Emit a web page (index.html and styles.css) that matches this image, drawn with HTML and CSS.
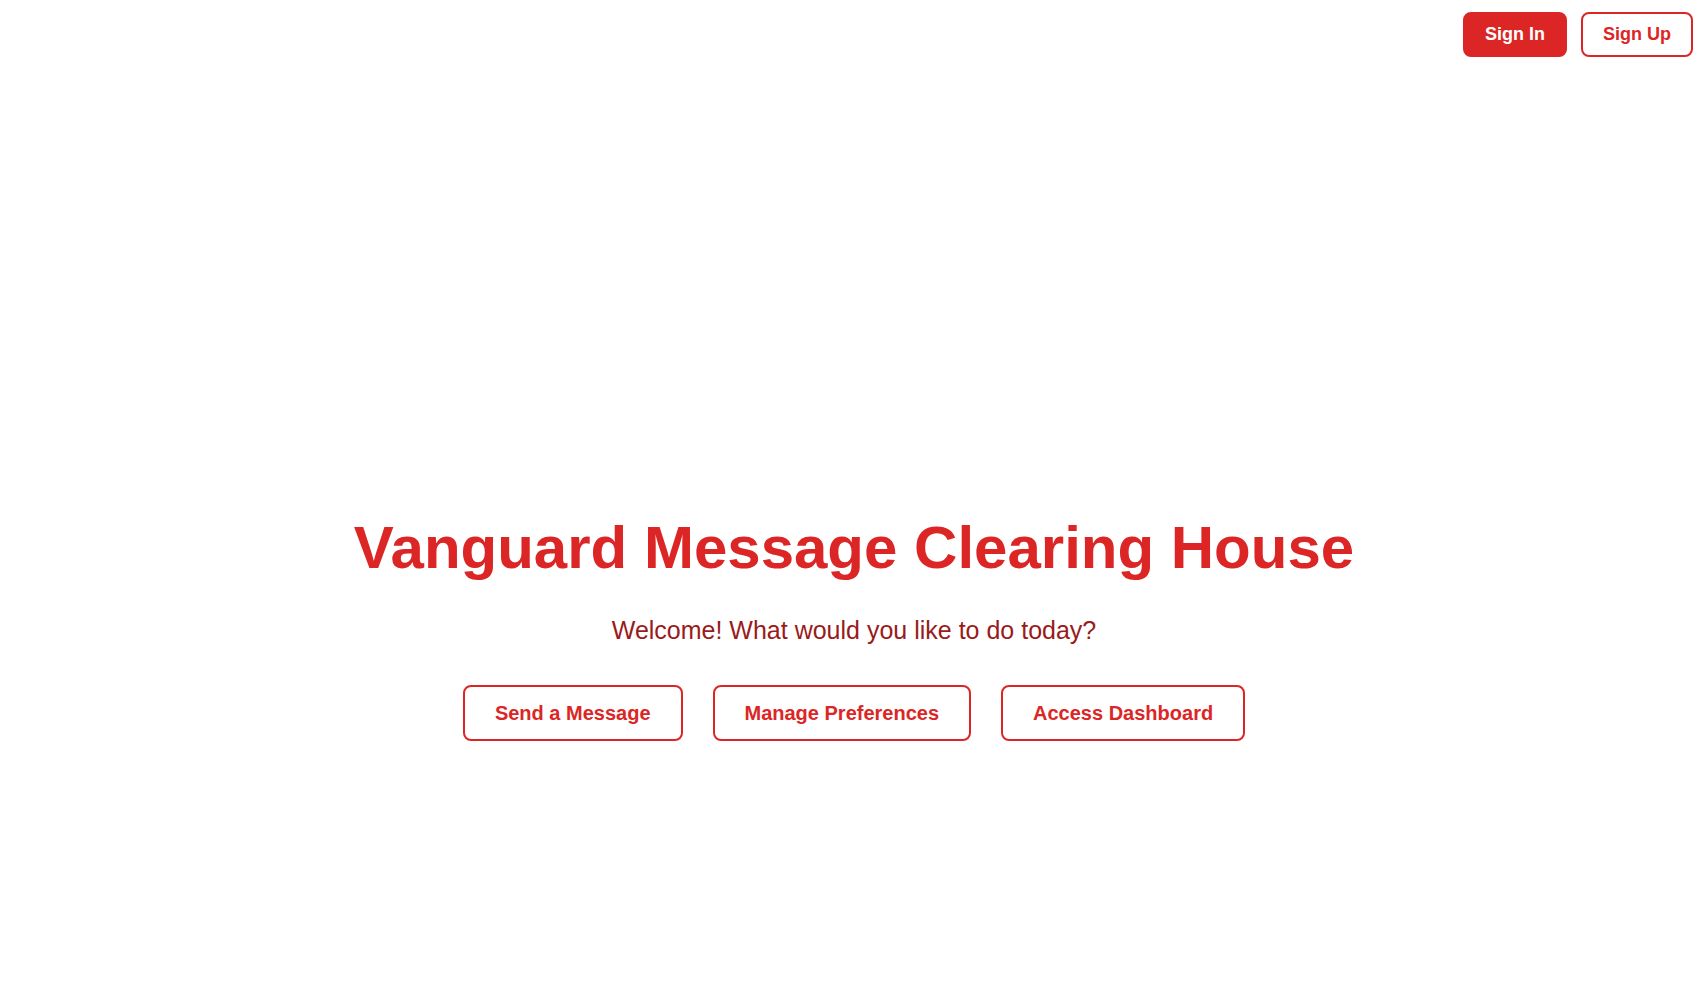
FILE: index.html
```html
<!DOCTYPE html>
<html lang="en">
<head>
<meta charset="utf-8">
<title>Vanguard Message Clearing House</title>
<link rel="stylesheet" href="styles.css">
</head>
<body>
<header class="topbar">
  <a class="btn-sm btn-solid" href="#">Sign In</a>
  <a class="btn-sm btn-outline" href="#">Sign Up</a>
</header>
<main class="hero">
  <h1 class="title">Vanguard Message Clearing House</h1>
  <p class="subtitle">Welcome! What would you like to do today?</p>
  <div class="actions">
    <a class="btn-lg" href="#">Send a Message</a>
    <a class="btn-lg" href="#">Manage Preferences</a>
    <a class="btn-lg" href="#">Access Dashboard</a>
  </div>
</main>
</body>
</html>
```
FILE: styles.css
```css
html, body {
  margin: 0;
  padding: 0;
  background: #ffffff;
}

body {
  font-family: "Liberation Sans", Arial, sans-serif;
  color: #dc2626;
}

a {
  text-decoration: none;
}

.topbar {
  display: flex;
  justify-content: flex-end;
  gap: 14px;
  padding: 12px 7px 0 0;
}

.btn-sm {
  display: block;
  font-size: 18px;
  line-height: 21px;
  font-weight: 700;
  padding: 10px 20px;
  border: 2px solid #dc2626;
  border-radius: 8px;
}

.btn-solid {
  background: #dc2626;
  color: #ffffff;
}

.btn-outline {
  background: #ffffff;
  color: #dc2626;
}

.hero {
  display: flex;
  flex-direction: column;
  align-items: center;
  padding-top: 461px;
  padding-left: 8px;
}

.title {
  margin: 0;
  font-size: 60px;
  line-height: 60px;
  font-weight: 700;
  color: #dc2626;
}

.subtitle {
  margin: 36px 0 0;
  font-size: 25px;
  line-height: 32px;
  color: #991b1b;
}

.actions {
  display: flex;
  gap: 30px;
  margin-top: 39px;
}

.btn-lg {
  display: block;
  font-size: 20px;
  line-height: 28px;
  font-weight: 700;
  color: #dc2626;
  padding: 12px 30px;
  border: 2px solid #dc2626;
  border-radius: 8px;
  background: #ffffff;
}
```
